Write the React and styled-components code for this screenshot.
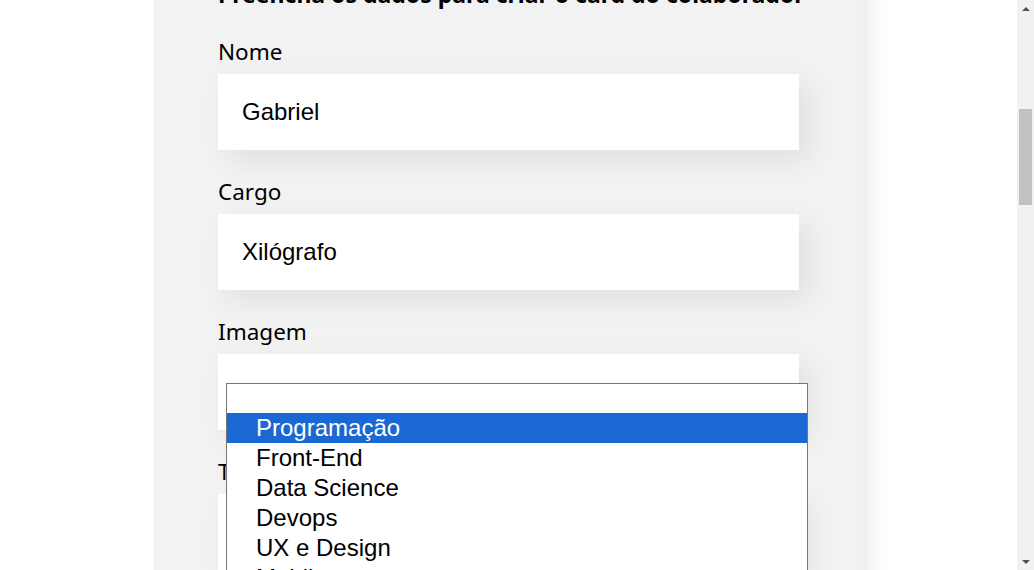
import React, { useLayoutEffect, useRef } from "react";
import styled, { createGlobalStyle } from "styled-components";

const GlobalStyle = createGlobalStyle`
  html, body { margin: 0; padding: 0; height: 100%; overflow: hidden; background: #fff; }
  body { font-family: "Noto Sans", sans-serif; }
  * { box-sizing: border-box; }
`;

const Window = styled.div`
  display: flex;
  height: 100vh;
  width: 100vw;
  background: #fff;
`;

const Viewport = styled.div`
  flex: 1;
  min-width: 0;
  height: 100%;
  overflow: hidden;
`;

const ScrollBar = styled.div`
  width: 17px;
  height: 100%;
  background: #f1f1f1;
  display: flex;
  flex-direction: column;
  align-items: center;
`;

const ArrowButton = styled.div`
  width: 17px;
  height: 17px;
  display: flex;
  align-items: center;
  justify-content: center;

  &::before {
    content: "";
    width: 0;
    height: 0;
    border-left: 4px solid transparent;
    border-right: 4px solid transparent;
    ${(p) =>
      p.$down
        ? "border-top: 4px solid #505050;"
        : "border-bottom: 4px solid #505050;"}
  }
`;

const ThumbSpacer = styled.div`
  height: 92px;
  flex-shrink: 0;
`;

const Thumb = styled.div`
  width: 13px;
  height: 96px;
  background: #c1c1c1;
  flex-shrink: 0;
`;

const TrackRest = styled.div`
  flex: 1;
`;

const Banner = styled.header`
  height: 408px;
  background: #6278f7;
`;

const FormSection = styled.section`
  display: flex;
  justify-content: center;
  padding: 80px 0;
`;

const FormCard = styled.form`
  width: 709px;
  background: #f2f2f2;
  border-radius: 20px;
  padding: 36px 64px;
  box-shadow: 8px 8px 16px rgba(0, 0, 0, 0.08);
  display: flex;
  flex-direction: column;
  gap: 24px;
`;

const Title = styled.h2`
  margin: 2px 0 0;
  font-family: "Noto Sans", sans-serif;
  font-size: 23px;
  font-weight: 700;
  line-height: 32px;
  color: #000;
  white-space: nowrap;
`;

const Field = styled.div`
  position: relative;
  display: flex;
  flex-direction: column;
  gap: 8px;
`;

const Label = styled.label`
  font-family: "Noto Sans", sans-serif;
  font-size: 22.5px;
  line-height: 28px;
  padding-top: 4px;
  color: #000;
`;

const Input = styled.input`
  width: 100%;
  height: 76px;
  border: none;
  outline: none;
  padding: 24px;
  background: #fff;
  font-family: "Liberation Sans", Arial, sans-serif;
  font-size: 24px;
  color: #000;
  box-shadow: 10px 10px 30px rgba(0, 0, 0, 0.08);
`;

const SelectBox = styled.div`
  width: 100%;
  height: 76px;
  background: #fff;
  box-shadow: 10px 10px 30px rgba(0, 0, 0, 0.08);
`;

const Popup = styled.ul`
  position: absolute;
  left: 8px;
  top: -71px;
  width: 582px;
  margin: 0;
  padding: 0;
  list-style: none;
  background: #fff;
  border: 1px solid #767676;
  z-index: 10;
`;

const Option = styled.li`
  height: 30px;
  padding-left: 29px;
  display: flex;
  align-items: center;
  font-family: "Liberation Sans", Arial, sans-serif;
  font-size: 24px;
  color: ${(p) => (p.$selected ? "#fff" : "#000")};
  background: ${(p) => (p.$selected ? "#1a68d3" : "#fff")};
  white-space: nowrap;

  &:first-child {
    height: 29px;
  }
`;

const Button = styled.button`
  align-self: flex-start;
  background: #6278f7;
  border: none;
  border-radius: 10px;
  padding: 24px 32px;
  color: #fff;
  font-family: "Noto Sans", sans-serif;
  font-size: 18px;
  font-weight: 700;
`;

const Teams = styled.section`
  min-height: 1860px;
  display: flex;
  flex-direction: column;
  align-items: center;
`;

const TeamsTitle = styled.h2`
  margin: 0;
  font-family: "Noto Sans", sans-serif;
  font-size: 40px;
  color: #6278f7;
`;

const options = [
  "",
  "Programação",
  "Front-End",
  "Data Science",
  "Devops",
  "UX e Design",
  "Mobile",
  "Inovação e Gestão",
];

export default function App() {
  const ref = useRef(null);
  useLayoutEffect(() => {
    if (ref.current) ref.current.scrollTop = 548;
  }, []);

  return (
    <>
      <GlobalStyle />
      <Window>
        <Viewport ref={ref}>
          <Banner />
          <FormSection>
            <FormCard onSubmit={(e) => e.preventDefault()}>
              <Title>Preencha os dados para criar o card do colaborador</Title>
              <Field>
                <Label>Nome</Label>
                <Input defaultValue="Gabriel" />
              </Field>
              <Field>
                <Label>Cargo</Label>
                <Input defaultValue="Xilógrafo" />
              </Field>
              <Field>
                <Label>Imagem</Label>
                <Input defaultValue="" />
              </Field>
              <Field>
                <Label>Time</Label>
                <SelectBox />
                <Popup>
                  {options.map((o, i) => (
                    <Option key={i} $selected={o === "Programação"}>
                      {o}
                    </Option>
                  ))}
                </Popup>
              </Field>
              <Button type="submit">Criar card</Button>
            </FormCard>
          </FormSection>
          <Teams>
            <TeamsTitle>Minha organização</TeamsTitle>
          </Teams>
        </Viewport>
        <ScrollBar>
          <ArrowButton />
          <ThumbSpacer />
          <Thumb />
          <TrackRest />
          <ArrowButton $down />
        </ScrollBar>
      </Window>
    </>
  );
}
